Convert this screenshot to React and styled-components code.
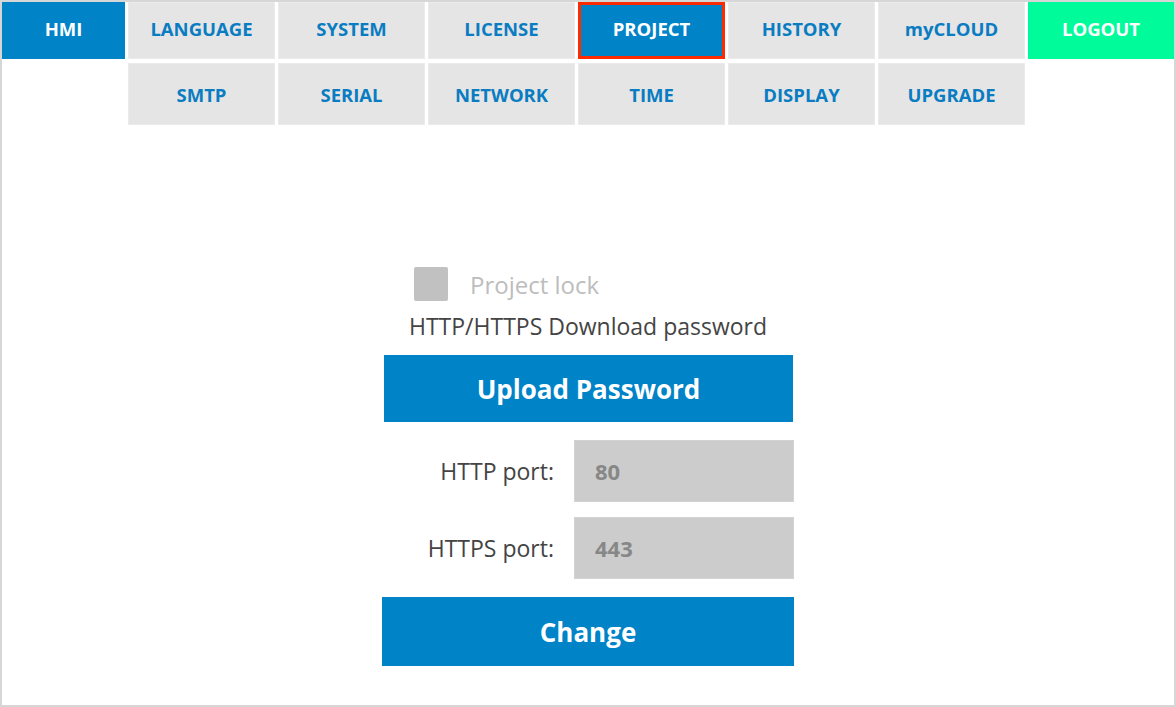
import React from "react";
import styled, { createGlobalStyle } from "styled-components";

const GlobalStyle = createGlobalStyle`
  html, body {
    margin: 0;
    padding: 0;
    background: #ffffff;
  }
  * {
    box-sizing: border-box;
  }
`;

const Frame = styled.div`
  width: 1176px;
  height: 707px;
  border: 2px solid #d6d6d6;
  background: #ffffff;
  font-family: "Open Sans", "Noto Sans", sans-serif;
  overflow: hidden;
`;

const Menu = styled.nav`
  display: grid;
  grid-template-columns: 123px repeat(6, 147px) 1fr;
  grid-template-rows: 57px 62px;
  column-gap: 3px;
  row-gap: 4px;
`;

const Tab = styled.div`
  display: flex;
  align-items: center;
  justify-content: center;
  padding-bottom: ${({ top }) => (top ? "4px" : "0")};
  font-size: 18.5px;
  font-weight: 700;
  color: ${({ variant }) =>
    variant === "blue" || variant === "active" || variant === "green"
      ? "#ffffff"
      : "#0a7cc2"};
  background: ${({ variant }) =>
    variant === "blue" || variant === "active"
      ? "#0083c7"
      : variant === "green"
      ? "#00fb9b"
      : "#e5e5e5"};
  border: ${({ variant }) => (variant === "active" ? "3px" : "1px")} solid;
  border-color: ${({ variant }) =>
    variant === "active"
      ? "#ff2a00"
      : variant === "blue" || variant === "green"
      ? "transparent"
      : "#ebebeb"};
  grid-column: ${({ col }) => col || "auto"};
  cursor: pointer;
`;

const Content = styled.main`
  width: 412px;
  margin: 142px auto 0;
  display: flex;
  flex-direction: column;
`;

const LockRow = styled.label`
  display: flex;
  align-items: center;
  gap: 22px;
  padding-left: 32px;
  height: 34px;
`;

const Box = styled.span`
  width: 34px;
  height: 34px;
  border-radius: 2px;
  background: #c1c1c1;
`;

const LockText = styled.span`
  font-size: 24px;
  color: #bdbdbd;
`;

const Caption = styled.div`
  margin-top: 10px;
  text-align: center;
  font-size: 23px;
  color: #444444;
  line-height: 30px;
`;

const Button = styled.button`
  display: block;
  width: ${({ narrow }) => (narrow ? "409px" : "412px")};
  height: ${({ narrow }) => (narrow ? "67px" : "69px")};
  margin: ${({ narrow }) => (narrow ? "14px 0 0 2px" : "18px 0 0")};
  border: none;
  background: #0083c7;
  color: #ffffff;
  font-family: "Open Sans", "Noto Sans", sans-serif;
  font-weight: 700;
  font-size: 26px;
  cursor: pointer;
`;

const PortRow = styled.div`
  display: grid;
  grid-template-columns: 172px 220px;
  column-gap: 20px;
  align-items: center;
  margin-top: ${({ first }) => (first ? "18px" : "15px")};
`;

const PortLabel = styled.span`
  text-align: right;
  font-size: 23px;
  color: #444444;
`;

const PortInput = styled.input`
  height: 62px;
  border: 1px solid #d3d3d3;
  background: #cccccc;
  padding: 0 0 0 20px;
  font-family: "Open Sans", "Noto Sans", sans-serif;
  font-size: 22px;
  font-weight: 700;
  color: #878787;
  outline: none;
`;

const topTabs = ["LANGUAGE", "SYSTEM", "LICENSE", "PROJECT", "HISTORY", "myCLOUD"];
const subTabs = ["SMTP", "SERIAL", "NETWORK", "TIME", "DISPLAY", "UPGRADE"];

export default function App() {
  return (
    <>
      <GlobalStyle />
      <Frame>
        <Menu>
          <Tab top variant="blue">HMI</Tab>
          {topTabs.map((t) => (
            <Tab key={t} top variant={t === "PROJECT" ? "active" : "plain"}>
              {t}
            </Tab>
          ))}
          <Tab top variant="green">LOGOUT</Tab>
          {subTabs.map((t, i) => (
            <Tab key={t} variant="plain" col={i === 0 ? "2" : undefined}>
              {t}
            </Tab>
          ))}
        </Menu>
        <Content>
          <LockRow>
            <Box />
            <LockText>Project lock</LockText>
          </LockRow>
          <Caption>HTTP/HTTPS Download password</Caption>
          <Button narrow>Upload Password</Button>
          <PortRow first>
            <PortLabel>HTTP port:</PortLabel>
            <PortInput defaultValue="80" />
          </PortRow>
          <PortRow>
            <PortLabel>HTTPS port:</PortLabel>
            <PortInput defaultValue="443" />
          </PortRow>
          <Button>Change</Button>
        </Content>
      </Frame>
    </>
  );
}
